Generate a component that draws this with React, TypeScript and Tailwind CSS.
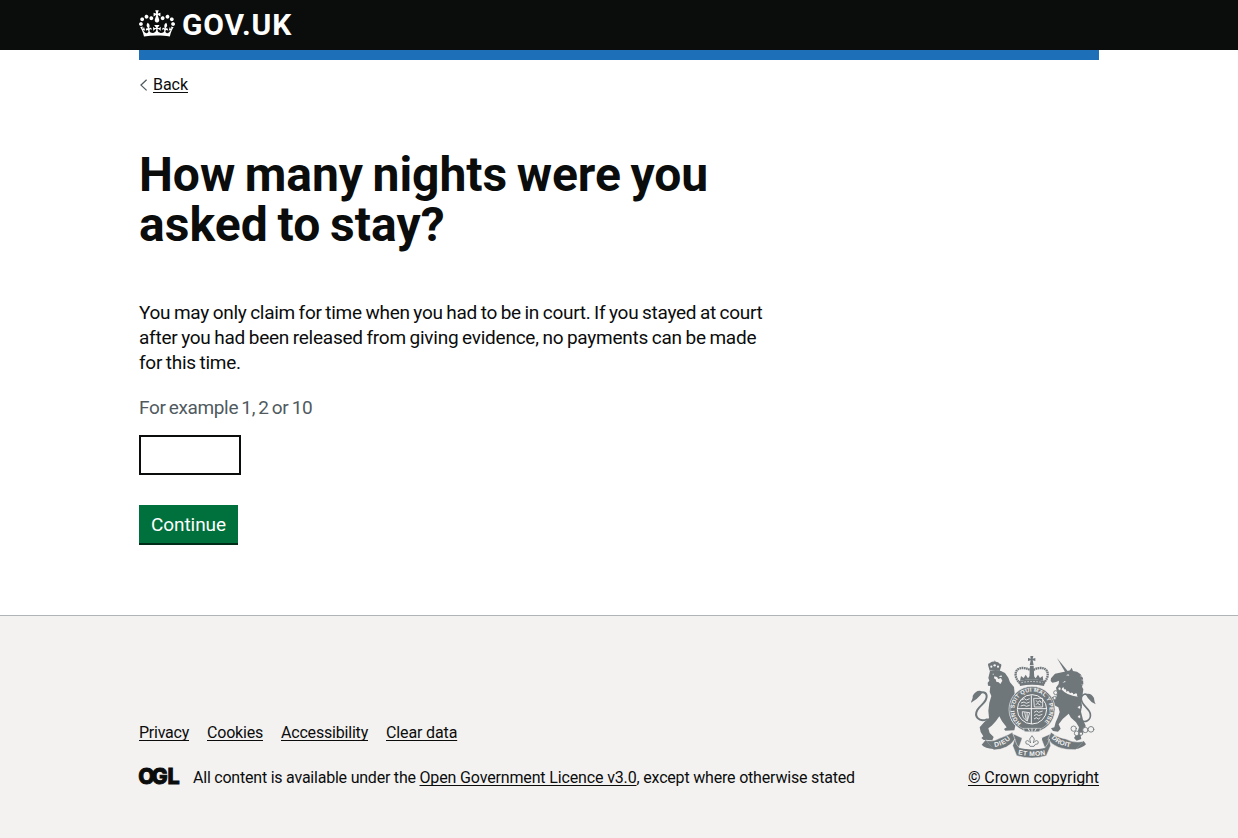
import type { ReactNode } from "react";

function Crown() {
  return (
    <svg viewBox="0 0 132 97" className="mt-0.5 h-[27px] w-9 shrink-0 fill-current" aria-hidden="true">
      <path
        fillRule="evenodd"
        d="M25 30.2c3.5 1.5 7.7-.2 9.1-3.7 1.5-3.6-.2-7.8-3.9-9.2-3.6-1.4-7.6.3-9.1 3.9-1.4 3.5.3 7.5 3.9 9zM9 39.5c3.6 1.5 7.8-.2 9.1-3.7 1.5-3.6-.2-7.8-3.9-9.1-3.6-1.5-7.6.2-9.1 3.7-1.4 3.5.3 7.6 3.9 9.1zM4.4 57.2c3.5 1.5 7.7-.2 9.1-3.8 1.5-3.6-.2-7.7-3.9-9.1-3.5-1.5-7.6.3-9.1 3.8-1.4 3.5.3 7.6 3.9 9.1zm38.3-21.4c3.5 1.5 7.7-.2 9.1-3.8 1.5-3.6-.2-7.7-3.9-9.1-3.6-1.5-7.6.3-9.1 3.8-1.3 3.6.4 7.7 3.9 9.1zm64.4-5.6c-3.6 1.5-7.8-.2-9.1-3.7-1.5-3.6.2-7.8 3.8-9.2 3.6-1.4 7.7.3 9.2 3.9 1.3 3.5-.4 7.5-3.9 9zm15.9 9.3c-3.6 1.5-7.7-.2-9.1-3.7-1.5-3.6.2-7.8 3.7-9.1 3.6-1.5 7.7.2 9.2 3.7 1.5 3.5-.3 7.6-3.8 9.1zm4.7 17.7c-3.6 1.5-7.8-.2-9.2-3.8-1.5-3.6.2-7.7 3.9-9.1 3.6-1.5 7.7.3 9.2 3.8 1.3 3.5-.4 7.6-3.9 9.1zM89.3 35.8c-3.6 1.5-7.8-.2-9.2-3.8-1.4-3.6.2-7.7 3.9-9.1 3.6-1.5 7.7.3 9.2 3.8 1.4 3.6-.3 7.7-3.9 9.1zM69.7 17.7l8.9 4.7V9.3l-8.9 2.8c-.2-.3-.5-.6-.9-.9L72.4 0H59.6l3.5 11.2c-.3.3-.6.5-.9.9l-8.8-2.8v13.1l8.8-4.7c.3.3.6.7.9.9l-5 15.4v.1c-.2.8-.4 1.6-.4 2.4 0 4.1 3.1 7.5 7 8.1h.2c.3 0 .7.1 1 .1.4 0 .7 0 1-.1h.2c4-.6 7.1-4.1 7.1-8.1 0-.8-.1-1.7-.4-2.4V34l-5.1-15.4c.4-.2.7-.6 1-.9zM66 92.8c16.9 0 32.8 1.1 47.1 3.2 4-16.9 8.9-26.7 14-33.5l-9.6-3.4c1 4.9 1.1 7.2 0 10.2-1.5-1.4-3-4.3-4.2-8.7L108.6 76c2.8-2 5-3.2 7.5-3.3-4.4 9.4-10 11.9-13.6 11.2-4.3-.8-6.3-4.6-5.6-7.9 1-4.7 5.7-5.9 8-.5 4.3-8.7-3-11.4-7.6-8.8 7.1-7.2 7.9-13.5 2.1-21.1-8 6.1-8.1 12.3-4.5 20.8-4.7-5.4-12.1-2.5-9.5 6.2 3.4-5.2 7.9-2 7.2 3.1-.6 4.3-6.4 7.8-13.5 7.2-10.3-.9-10.9-8-11.2-13.8 2.5-.5 7.1 1.8 11 7.3L80.2 60c-4.1 4.4-8 5.3-12.3 5.4 1.4-4.4 8-11.6 8-11.6H55.5s6.4 7.2 7.9 11.6c-4.2-.1-8-1-12.3-5.4l1.4 16.4c3.9-5.5 8.5-7.7 10.9-7.3-.3 5.8-.9 12.8-11.1 13.8-7.2.6-12.9-2.9-13.5-7.2-.7-5 3.8-8.3 7.1-3.1 2.7-8.7-4.6-11.6-9.4-6.2 3.7-8.5 3.6-14.7-4.6-20.8-5.8 7.6-5 13.9 2.2 21.1-4.7-2.6-11.9.1-7.7 8.8 2.3-5.5 7.1-4.2 8.1.5.7 3.3-1.3 7.1-5.7 7.9-3.5.7-9-1.8-13.5-11.2 2.5.1 4.7 1.3 7.5 3.3l-4.7-15.4c-1.2 4.4-2.7 7.2-4.3 8.7-1.1-3-.9-5.3 0-10.2l-9.5 3.4c5 6.9 9.9 16.7 14 33.5 14.8-2.1 30.8-3.2 47.7-3.2z"
      />
    </svg>
  );
}

const GREY = "#6f777b";
const PAPER = "#f3f2f1";

function CoatOfArms() {
  return (
    <svg viewBox="33 18 375 306" className="h-[102px] w-[125px]" aria-hidden="true">
      {/* lion */}
      <g fill={GREY} strokeLinejoin="round" strokeLinecap="round">
        <path d="M89 62 84 45q-1-6 5-5 6-7 14-5l1-4 3 4q9 0 12 6 6-1 5 6l-5 16q-15-5-30-1z" />
        <g fill={PAPER}>
          <circle cx="94" cy="50" r="3.2" />
          <circle cx="104" cy="46" r="3.6" />
          <circle cx="114" cy="50" r="3.2" />
        </g>
        <path d="M90 63q16-6 33 0l12 6 10 14 5 14 12 14 2 20-8 20-3 30-4 14 5 16 12 16-3 14-27 1-4-5 8-5-14-18-8-15-10 14-13 14-10 8 4 14 12 12-4 10-26-1-7-6 6-5-8-13-3-14 14-16 14-12-2-22 3-24 6-20-5-12 2-18-7-1-1-9 5-6-3-8z" />
        <path d="M146 142l14-6 10 6-3 10-12 1-4 13zM140 182l14 3 11-5 4 10-15 6-14-3z" />
        <path d="M81 208c-26 10-39-10-29-28 8-15 29-22 28-42-1-12-13-14-21-7" fill="none" stroke={GREY} strokeWidth="6" />
        <path d="M33 158c2-10 6-11 5-20 7-14 19-20 29-13l-6 11q-11 14-28 22z" />
        <path d="M103 79l8 2 4 6 8-3 4 8-6 10-5-5-7-2-2-7-5-3z" fill={PAPER} />
        <path d="M116 80l8-4 2 5zM96 72l6-1-1 3z" fill={PAPER} />
        <path d="M100 131l4 23 12 11M132 128l-8 22 4 17" fill="none" stroke={GREY} strokeWidth="1.5" />
      </g>
      {/* unicorn */}
      <g fill={GREY} strokeLinejoin="round" strokeLinecap="round">
        <path d="M291 24l32 39-6 6z" />
        <path d="M320 64l10-3 5-8 4 10 12 2 11 8 7 12 1 17-4 8 4 8-2 15-5 14 3 20-3 18 6 24 8 18-3 15-12 15 2 10-14 5-8-8 10-15 5-17-9-15-15-14-7-12-18 16-12 16 6 13-8 9-15-2-6-8 10-3 4-15 7-16 5-15-4-14-15-8-14 3-12 7-8-4 7-10 15-9-10-14-9-3-7-8 10-3 10 6 9 11 18 2 2-15-3-14 8-11 1-10-9 4-11 2-5-5 1-8 12-14z" />
        <path d="M318 76l7-3 3 4zM307 98l8-5 2 3z" fill={PAPER} />
        <path d="M362 78l8 2M366 90l8 1M366 104l7 4" stroke={PAPER} strokeWidth="2" />
        <path d="M309 111q17 20 45 20l-1 9q-31-2-49-22z" fill={PAPER} />
        <path d="M307 112l7-7-1 12 9-7-2 14 10-8 0 13 9-8 2 11 11-9 1 15" fill="none" stroke={GREY} strokeWidth="3" />
        <path d="M359 209c16 12 35 2 32-17-3-18-31-28-27-49 3-12 14-13 21-6" fill="none" stroke={GREY} strokeWidth="5" />
        <path d="M407 163c-4-8-4-13-5-19-6-12-16-16-25-11l6 10q10 14 24 20z" />
        <g fill={PAPER} stroke={GREY} strokeWidth="2.6">
          <circle cx="299" cy="116" r="5" />
          <circle cx="287" cy="128" r="6" />
          <circle cx="284" cy="144" r="5" />
          <circle cx="358" cy="172" r="5" />
          <circle cx="358" cy="200" r="5" />
          <circle cx="341" cy="236" r="8" />
          <circle cx="350" cy="250" r="7" />
          <circle cx="376" cy="240" r="8" />
          <circle cx="393" cy="238" r="8.5" />
          <circle cx="363" cy="251" r="5" />
        </g>
      </g>
      {/* central crown */}
      <g fill={GREY}>
        <path d="M211 18h9l-2 8 8-2v9l-8-2 3 15h-12l3-15-8 2v-9l8 2z" />
        <path d="M180 100c-21-20-16-47 8-46 12 0 20 4 27 10 7-6 15-10 27-10 24-1 29 26 8 46" fill="none" stroke={GREY} strokeWidth="7" strokeDasharray="5 1.6" />
        <path d="M210 48h11l2 38h-15z" />
        <path d="M180 92l3-14 8 6 6-10 7 11 11-13 12 13 7-11 6 10 8-6 2 14q-34-7-70 0z" />
        <path d="M177 93q39-10 78 0l-3 15q-36-7-72 0z" />
        <path d="M184 98q32-7 64 0" fill="none" stroke={PAPER} strokeWidth="2" strokeDasharray="5 4" />
      </g>
      {/* garter and shield */}
      <circle cx="216" cy="178" r="69" fill={GREY} stroke={PAPER} strokeWidth="2" />
      <circle cx="216" cy="178" r="64" fill="none" stroke={PAPER} strokeWidth="1.2" />
      <circle cx="216" cy="178" r="44" fill={GREY} stroke={PAPER} strokeWidth="3" />
      <defs>
        <path id="garter" d="M187 222a52.8 52.8 0 1 1 58 0" />
        <path id="scroll-left" d="M104 291q31-4 51-28" />
        <path id="scroll-mid" d="M174 313q42 10 84 0" />
        <path id="scroll-right" d="M274 264q21 24 62 28" />
      </defs>
      <text fill={PAPER} fontFamily="Liberation Sans" fontWeight="700" fontSize="17">
        <textPath href="#garter" startOffset="4" textLength="256">HONI SOIT QUI MAL Y PENSE</textPath>
      </text>
      <path d="M214 136v86M174 176h84" stroke={PAPER} strokeWidth="3" />
      <g fill="none" stroke={PAPER} strokeWidth="2.6">
        <path d="M185 150l8-4 6 4 10-4M183 159l9-3 7 4 10-4M182 168l10-3 7 4 10-3" />
        <path d="M221 145h27v26h-25zM228 151l5 6 7-5 4 7M227 164l6-4 8 5" />
        <path d="M187 185q-2 20 15 28l7-25zM194 187l5 22M201 187l1 22" />
        <path d="M222 187l8-4 6 4 12-4M222 197l8-4 6 4 11-4M222 207l7-4 6 4 6-4" />
      </g>
      <path d="M190 235h52l-4 10h-44z" fill={GREY} stroke={PAPER} strokeWidth="1.5" />
      <path d="M204 235l5 9M216 235v10M229 235l-5 9" stroke={PAPER} strokeWidth="3" />
      {/* motto ribbon */}
      <g fill={GREY} stroke={PAPER} strokeWidth="1.6" strokeLinejoin="round">
        <path d="M158 251l29 13-11 31-13-14z" />
        <path d="M273 251l-30 13 12 31 13-14z" />
        <path d="M77 270q20 7 41-5 24-8 39-18l8 21q-21 31-64 32z" />
        <path d="M273 247q21 17 45 20 22 13 53 7l-25 25q-60 2-82-31z" />
        <path d="M164 267q5 19 14 26 38 9 77 0 10-10 13-26l4 20-13 30q-42 14-89 0l-12-30z" />
      </g>
      <path d="M65 284l12-14 24 27q-26-2-36-13zM371 273l-25 25q21-4 32-15z" fill={GREY} />
      <g fill={PAPER} fontFamily="Liberation Sans" fontWeight="700" fontSize="20">
        <text><textPath href="#scroll-left" textLength="54">DIEU</textPath></text>
        <text><textPath href="#scroll-mid" textLength="83">ET MON</textPath></text>
        <text><textPath href="#scroll-right" textLength="64">DROIT</textPath></text>
      </g>
      {/* fleur-de-lis */}
      <g fill={PAPER} stroke={GREY} strokeWidth="2.6" strokeLinejoin="round">
        <path d="M185 263q31-8 62 0l-9 29q-22 5-44 0z" stroke="none" />
        <path d="M216 257l7 10-3 12q11-13 15-3 1 8-9 7l-4 6h-12l-4-6q-10 1-9-7 4-10 15 3l-3-12z" />
      </g>
    </svg>
  );
}

function OglLogo() {
  return (
    <svg viewBox="0 0 42 18" className="mt-[-1px] mr-3 h-[18px] w-[42px] shrink-0 overflow-visible" aria-label="OGL">
      <text
        x="-0.8 12.6 28.4"
        y="16.6"
        fill="#0b0c0c"
        stroke="#0b0c0c"
        strokeWidth="0.9"
        fontFamily="Inter"
        fontWeight="800"
        fontSize="21.5"
      >
        OGL
      </text>
    </svg>
  );
}

function Link({ children, className = "" }: { children: ReactNode; className?: string }) {
  return (
    <a href="#" className={`underline decoration-1 underline-offset-2 [text-decoration-skip-ink:none] ${className}`}>
      {children}
    </a>
  );
}

export default function App() {
  return (
    <div className="flex min-h-screen flex-col bg-white font-['Roboto',sans-serif] text-[#0b0c0c]">
      <header className="h-[50px] bg-[#0b0c0c] text-white">
        <div className="mx-auto flex w-[960px] pt-2">
          <Crown />
          <span className="ml-[7px] text-[30px] leading-[34px] font-bold tracking-[0.9px]">GOV.UK</span>
        </div>
      </header>

      <div className="mx-auto w-[960px]">
        <div className="h-2.5 bg-[#1d70b8]" />
        <div className="flex pt-[15px] text-base leading-5">
          <svg viewBox="0 0 14 20" className="h-5 w-3.5" fill="none" stroke="#505a5f" strokeWidth="1.3" aria-hidden="true">
            <path d="M7.6 4.8 2 10.1l5.6 5.3" />
          </svg>
          <Link className="tracking-[-0.04px]">Back</Link>
        </div>

        <main className="pt-[55px] text-[19px] leading-[25px]">
          <h1 className="text-5xl leading-[50px] font-bold">
            <span className="block tracking-[-0.05px] [word-spacing:-2.2px]">How many nights were you</span>
            <span className="block tracking-[0.05px] [word-spacing:-2.2px]">asked to stay?</span>
          </h1>
          <p className="mt-[50px] whitespace-nowrap [word-spacing:-0.8px]">
            <span className="block tracking-[-0.27px]">
              You may only claim for time when you had to be in court. If you stayed at court
            </span>
            <span className="block tracking-[-0.24px]">
              after you had been released from giving evidence, no payments can be made
            </span>
            <span className="block tracking-[-0.26px]">for this time.</span>
          </p>
          <p className="mt-5 tracking-[-0.36px] text-[#505a5f] [word-spacing:-1.1px]">For example 1, 2 or 10</p>
          <input
            type="text"
            aria-label="Number of nights"
            className="mt-[15px] block h-10 w-[102px] border-2 border-[#0b0c0c] px-1"
          />
          <button className="mt-[30px] block h-[38px] w-[99px] bg-[#00703c] tracking-[-0.07px] text-white shadow-[0_2px_0_#002d18]">
            Continue
          </button>
        </main>
      </div>

      <footer className="mt-[72px] flex-1 border-t border-[#b1b4b6] bg-[#f3f2f1] pt-10 text-base leading-5">
        <div className="mx-auto flex w-[960px] items-end justify-between whitespace-nowrap">
          <div>
            <nav className="flex">
              <Link className="mr-[18px] w-[50px] tracking-[-0.241px]">Privacy</Link>
              <Link className="mr-[18px] w-[56px] tracking-[-0.201px]">Cookies</Link>
              <Link className="mr-[18px] w-[87px] tracking-[-0.195px]">Accessibility</Link>
              <Link className="tracking-[-0.135px]">Clear data</Link>
            </nav>
            <div className="mt-[25px] flex">
              <OglLogo />
              <p>
                <span className="tracking-[-0.22px]">All content is available under the </span>
                <Link className="tracking-[-0.147px]">Open Government Licence v3.0</Link>
                <span className="tracking-[-0.19px]">, except where otherwise stated</span>
              </p>
            </div>
          </div>
          <div className="flex flex-col items-center">
            <CoatOfArms />
            <Link className="mt-2.5 tracking-[-0.087px]">© Crown copyright</Link>
          </div>
        </div>
      </footer>
    </div>
  );
}
